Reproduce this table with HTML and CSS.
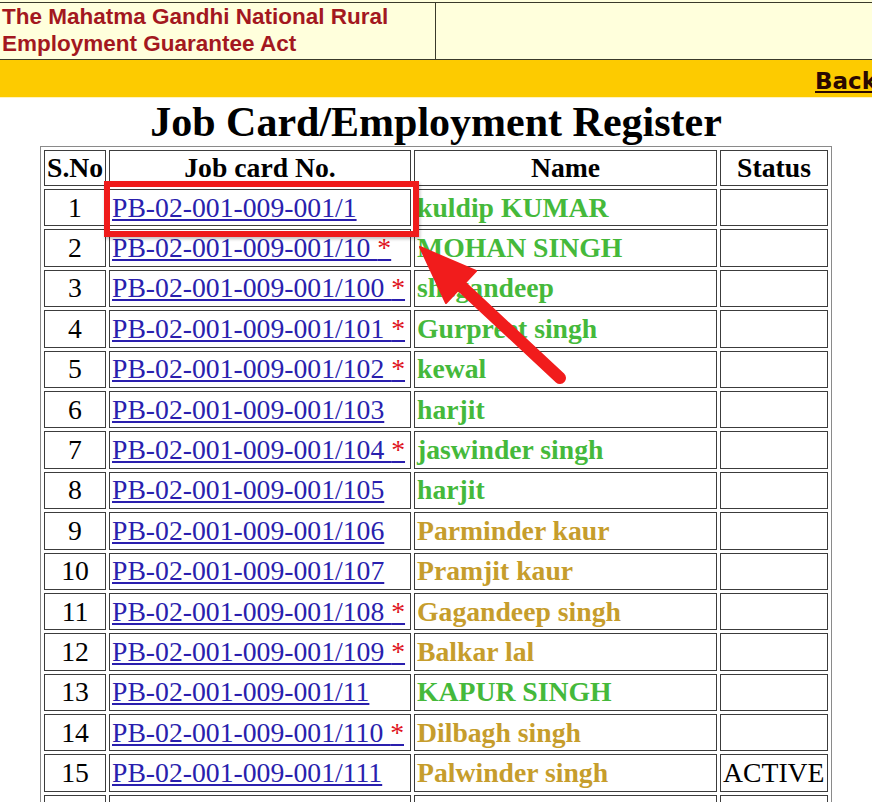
FILE: index.html
```html
<!DOCTYPE html>
<html>
<head>
<meta charset="utf-8">
<link rel="stylesheet" href="styles.css">
</head>
<body>
<div class="top">
  <div class="hdr">
    <div class="hdr-title">The Mahatma Gandhi National Rural<br>Employment Guarantee Act</div>
    <div class="hdr-blank"></div>
  </div>
  <div class="backbar"><a class="back" href="#">Back</a></div>
</div>
<h1 class="title">Job Card/Employment Register</h1>
<table class="reg">
  <colgroup><col class="c-sno"><col class="c-job"><col class="c-name"><col class="c-status"></colgroup>
  <tr class="head"><th>S.No</th><th>Job card No.</th><th>Name</th><th>Status</th></tr>
  <tr><td class="sno">1</td><td class="job"><a href="#">PB-02-001-009-001/1</a></td><td class="nm green">kuldip KUMAR</td><td class="st"></td></tr>
  <tr><td class="sno">2</td><td class="job"><a href="#">PB-02-001-009-001/10 <span class="star">*</span></a></td><td class="nm green">MOHAN SINGH</td><td class="st"></td></tr>
  <tr><td class="sno">3</td><td class="job"><a href="#">PB-02-001-009-001/100 <span class="star">*</span></a></td><td class="nm green">shegandeep</td><td class="st"></td></tr>
  <tr><td class="sno">4</td><td class="job"><a href="#">PB-02-001-009-001/101 <span class="star">*</span></a></td><td class="nm green">Gurpreet singh</td><td class="st"></td></tr>
  <tr><td class="sno">5</td><td class="job"><a href="#">PB-02-001-009-001/102 <span class="star">*</span></a></td><td class="nm green">kewal</td><td class="st"></td></tr>
  <tr><td class="sno">6</td><td class="job"><a href="#">PB-02-001-009-001/103</a></td><td class="nm green">harjit</td><td class="st"></td></tr>
  <tr><td class="sno">7</td><td class="job"><a href="#">PB-02-001-009-001/104 <span class="star">*</span></a></td><td class="nm green">jaswinder singh</td><td class="st"></td></tr>
  <tr><td class="sno">8</td><td class="job"><a href="#">PB-02-001-009-001/105</a></td><td class="nm green">harjit</td><td class="st"></td></tr>
  <tr><td class="sno">9</td><td class="job"><a href="#">PB-02-001-009-001/106</a></td><td class="nm gold">Parminder kaur</td><td class="st"></td></tr>
  <tr><td class="sno">10</td><td class="job"><a href="#">PB-02-001-009-001/107</a></td><td class="nm gold">Pramjit kaur</td><td class="st"></td></tr>
  <tr><td class="sno">11</td><td class="job"><a href="#">PB-02-001-009-001/108 <span class="star">*</span></a></td><td class="nm gold">Gagandeep singh</td><td class="st"></td></tr>
  <tr><td class="sno">12</td><td class="job"><a href="#">PB-02-001-009-001/109 <span class="star">*</span></a></td><td class="nm gold">Balkar lal</td><td class="st"></td></tr>
  <tr><td class="sno">13</td><td class="job"><a href="#">PB-02-001-009-001/11</a></td><td class="nm green">KAPUR SINGH</td><td class="st"></td></tr>
  <tr><td class="sno">14</td><td class="job"><a href="#">PB-02-001-009-001/110 <span class="star">*</span></a></td><td class="nm gold">Dilbagh singh</td><td class="st"></td></tr>
  <tr><td class="sno">15</td><td class="job"><a href="#">PB-02-001-009-001/111</a></td><td class="nm gold">Palwinder singh</td><td class="st">ACTIVE</td></tr>
  <tr class="last"><td class="sno"></td><td class="job"></td><td class="nm gold"></td><td class="st"></td></tr>
</table>
<div class="mark"></div>
<svg class="arrow" width="872" height="802" viewBox="0 0 872 802">
  <line x1="458" y1="283" x2="560" y2="378" stroke="#f11c1c" stroke-width="12" stroke-linecap="round"/>
  <polygon points="420,247 476,271 446,303" fill="#f11c1c" stroke="#f11c1c" stroke-width="2" stroke-linejoin="round"/>
</svg>
</body>
</html>
```
FILE: styles.css
```css
html, body {
  margin: 0;
  padding: 0;
  background: #ffffff;
  overflow: hidden;
  width: 872px;
  height: 802px;
  position: relative;
}

.top {
  background: #ffffdc;
  padding-top: 2px;
}

.hdr {
  display: grid;
  grid-template-columns: 436px 1fr;
  border-top: 1px solid #3a3a2a;
  border-bottom: 1px solid #3a3a2a;
  height: 56px;
}

.hdr-title {
  border-right: 1px solid #3a3a2a;
  padding-left: 2px;
  font-family: "Liberation Sans", Arial, sans-serif;
  font-weight: bold;
  font-size: 22.5px;
  line-height: 27px;
  color: #a3181f;
  white-space: nowrap;
}

.backbar {
  background: #fdcb00;
  height: 37px;
  display: flex;
  justify-content: flex-end;
  align-items: center;
  margin-right: -6px;
  border-bottom: 1px solid #fff3c0;
}

.back {
  font-family: "DejaVu Sans", Verdana, sans-serif;
  font-weight: bold;
  font-size: 23px;
  color: #2a0800;
  text-decoration: underline;
  margin-top: 4px;
  margin-right: 1px;
}

.title {
  margin: 0;
  text-align: center;
  font-family: "Liberation Serif", "Times New Roman", serif;
  font-weight: bold;
  font-size: 42px;
  line-height: 48px;
  color: #000;
}

.reg {
  margin: 0 auto;
  width: 792px;
  border: 1px solid #8a8a8a;
  border-collapse: separate;
  border-spacing: 3px;
  font-family: "Liberation Serif", "Times New Roman", serif;
  font-size: 27.7px;
  table-layout: fixed;
}

.c-sno { width: 62px; }
.c-job { width: 302px; }
.c-name { width: 303px; }
.c-status { width: 108px; }

.reg th, .reg td {
  box-sizing: border-box;
  border: 1px solid #3c3c3c;
  padding: 0 2px;
  vertical-align: middle;
  white-space: nowrap;
  overflow: hidden;
}

.reg tr { height: 37.4px; }
.reg tr.head { height: 36px; }

.reg th {
  font-weight: bold;
  text-align: center;
  color: #000;
}

.sno { text-align: center; color: #000; }

.job a {
  color: #2a1fae;
  text-decoration: underline;
}

.job { padding-left: 3px; }

.star { color: #e0141e; }

.nm {
  font-weight: bold;
  padding-left: 3px;
}

.green { color: #45b93b; }
.gold { color: #c69d2c; }

.st { color: #000; padding-left: 2px; }

.mark {
  position: absolute;
  left: 104px;
  top: 181px;
  width: 315px;
  height: 56px;
  box-sizing: border-box;
  border: 6px solid #ef1b1b;
  box-shadow: 1px 2px 3px rgba(0,0,0,0.25);
}

.arrow {
  position: absolute;
  left: 0;
  top: 0;
  pointer-events: none;
}
```
